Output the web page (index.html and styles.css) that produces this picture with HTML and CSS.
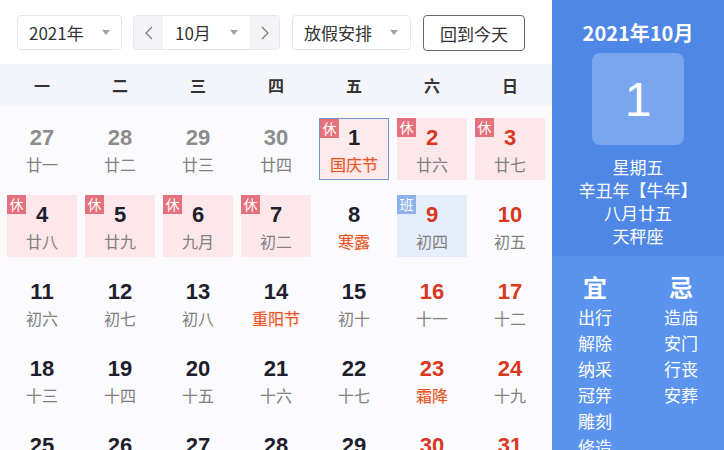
FILE: index.html
```html
<!DOCTYPE html>
<html lang="zh-CN">
<head>
<meta charset="utf-8">
<link rel="stylesheet" href="styles.css">
</head>
<body>
<div class="app">
  <div class="main">
    <div class="toolbar">
      <div class="select year"><span>2021年</span><i class="caret"></i></div>
      <div class="month-group">
        <div class="arrow"><svg width="8" height="14" viewBox="0 0 8 14"><polyline points="7,1 1,7 7,13" fill="none" stroke="#777" stroke-width="1.2"/></svg></div>
        <div class="select month"><span>10月</span><i class="caret"></i></div>
        <div class="arrow"><svg width="8" height="14" viewBox="0 0 8 14"><polyline points="1,1 7,7 1,13" fill="none" stroke="#777" stroke-width="1.2"/></svg></div>
      </div>
      <div class="select holiday"><span>放假安排</span><i class="caret"></i></div>
      <div class="today-btn">回到今天</div>
    </div>
    <div class="weekdays">
      <div>一</div><div>二</div><div>三</div><div>四</div><div>五</div><div>六</div><div>日</div>
    </div>
    <div class="days">
      <div class="day other"><div class="num">27</div><div class="lunar">廿一</div></div>
      <div class="day other"><div class="num">28</div><div class="lunar">廿二</div></div>
      <div class="day other"><div class="num">29</div><div class="lunar">廿三</div></div>
      <div class="day other"><div class="num">30</div><div class="lunar">廿四</div></div>
      <div class="day rest selected"><span class="badge">休</span><div class="num">1</div><div class="lunar fest">国庆节</div></div>
      <div class="day rest red"><span class="badge">休</span><div class="num">2</div><div class="lunar">廿六</div></div>
      <div class="day rest red"><span class="badge">休</span><div class="num">3</div><div class="lunar">廿七</div></div>

      <div class="day rest"><span class="badge">休</span><div class="num">4</div><div class="lunar">廿八</div></div>
      <div class="day rest"><span class="badge">休</span><div class="num">5</div><div class="lunar">廿九</div></div>
      <div class="day rest"><span class="badge">休</span><div class="num">6</div><div class="lunar">九月</div></div>
      <div class="day rest"><span class="badge">休</span><div class="num">7</div><div class="lunar">初二</div></div>
      <div class="day"><div class="num">8</div><div class="lunar fest">寒露</div></div>
      <div class="day work red"><span class="badge">班</span><div class="num">9</div><div class="lunar">初四</div></div>
      <div class="day red"><div class="num">10</div><div class="lunar">初五</div></div>

      <div class="day"><div class="num">11</div><div class="lunar">初六</div></div>
      <div class="day"><div class="num">12</div><div class="lunar">初七</div></div>
      <div class="day"><div class="num">13</div><div class="lunar">初八</div></div>
      <div class="day"><div class="num">14</div><div class="lunar fest">重阳节</div></div>
      <div class="day"><div class="num">15</div><div class="lunar">初十</div></div>
      <div class="day red"><div class="num">16</div><div class="lunar">十一</div></div>
      <div class="day red"><div class="num">17</div><div class="lunar">十二</div></div>

      <div class="day"><div class="num">18</div><div class="lunar">十三</div></div>
      <div class="day"><div class="num">19</div><div class="lunar">十四</div></div>
      <div class="day"><div class="num">20</div><div class="lunar">十五</div></div>
      <div class="day"><div class="num">21</div><div class="lunar">十六</div></div>
      <div class="day"><div class="num">22</div><div class="lunar">十七</div></div>
      <div class="day red"><div class="num">23</div><div class="lunar fest">霜降</div></div>
      <div class="day red"><div class="num">24</div><div class="lunar">十九</div></div>

      <div class="day"><div class="num">25</div><div class="lunar">二十</div></div>
      <div class="day"><div class="num">26</div><div class="lunar">廿一</div></div>
      <div class="day"><div class="num">27</div><div class="lunar">廿二</div></div>
      <div class="day"><div class="num">28</div><div class="lunar">廿三</div></div>
      <div class="day"><div class="num">29</div><div class="lunar">廿四</div></div>
      <div class="day red"><div class="num">30</div><div class="lunar">廿五</div></div>
      <div class="day red"><div class="num">31</div><div class="lunar">廿六</div></div>
    </div>
  </div>
  <div class="side">
    <div class="side-top">
      <div class="side-title">2021年10月</div>
      <div class="big-day">1</div>
      <div class="side-info">
        <div>星期五</div>
        <div>辛丑年【牛年】</div>
        <div>八月廿五</div>
        <div>天秤座</div>
      </div>
    </div>
    <div class="side-bottom">
      <div class="col">
        <div class="col-head">宜</div>
        <div>出行</div><div>解除</div><div>纳采</div><div>冠笄</div><div>雕刻</div><div>修造</div>
      </div>
      <div class="col">
        <div class="col-head">忌</div>
        <div>造庙</div><div>安门</div><div>行丧</div><div>安葬</div>
      </div>
    </div>
  </div>
</div>
</body>
</html>
```
FILE: styles.css
```css
* { box-sizing: border-box; }
html, body { margin: 0; padding: 0; }
body {
  width: 724px;
  height: 450px;
  overflow: hidden;
  font-family: "Noto Sans CJK SC", "Liberation Sans", sans-serif;
  background: #ffffff;
}
.app {
  display: flex;
  width: 724px;
  height: 450px;
  overflow: hidden;
}
.main {
  width: 552px;
  flex: none;
  background: #fbfbfd;
  overflow: hidden;
}
.toolbar {
  height: 64px;
  background: #ffffff;
  display: flex;
  align-items: flex-start;
  padding: 15px 0 0 17px;
}
.select {
  height: 35px;
  border: 1px solid #e6e6ea;
  border-radius: 4px;
  background: #fff;
  display: flex;
  align-items: center;
  justify-content: space-between;
  padding: 0 11px 0 11px;
  font-size: 17px;
  color: #333;
}
.caret {
  width: 0;
  height: 0;
  border-left: 4px solid transparent;
  border-right: 4px solid transparent;
  border-top: 5px solid #a0a0a0;
}
.year { width: 105px; }
.month-group {
  margin-left: 11px;
  display: flex;
  height: 35px;
  border: 1px solid #e6e6ea;
  border-radius: 4px;
  overflow: hidden;
}
.month-group .select {
  border: none;
  border-radius: 0;
  height: 33px;
  width: 87px;
  padding: 0 12px 0 12px;
}
.arrow {
  width: 29px;
  height: 33px;
  background: #f4f4f6;
  display: flex;
  align-items: center;
  justify-content: center;
}
.holiday { margin-left: 12px; width: 119px; padding-right: 12px; }
.today-btn {
  margin-left: 12px;
  width: 102px;
  height: 36px;
  border: 1px solid #6a6a6a;
  border-radius: 4px;
  background: #fff;
  display: flex;
  align-items: center;
  justify-content: center;
  font-size: 17px;
  color: #333;
}
.weekdays {
  height: 42px;
  background: #f3f5fa;
  display: grid;
  grid-template-columns: repeat(7, 70px);
  column-gap: 8px;
  padding: 0 7px;
  align-items: center;
  text-align: center;
  font-size: 16px;
  font-weight: bold;
  color: #333;
}
.days {
  display: grid;
  grid-template-columns: repeat(7, 70px);
  grid-auto-rows: 62px;
  column-gap: 8px;
  row-gap: 15px;
  padding: 12px 7px 0 7px;
}
.day {
  position: relative;
  text-align: center;
  padding-top: 7px;
}
.num {
  font-family: "Liberation Sans", "Noto Sans CJK SC", sans-serif;
  font-weight: bold;
  font-size: 22px;
  line-height: 26px;
  color: #1e1e2c;
}
.lunar {
  margin-top: 3px;
  font-size: 16px;
  line-height: 20px;
  color: #808080;
}
.other .num { color: #8c8c8c; }
.red .num { color: #d8381f; }
.fest {
  color: #e5552a;
  text-shadow: 0 0 2px rgba(255, 140, 80, 0.45);
}
.rest { background: #fde7ea; }
.work { background: #e6eefb; }
.selected {
  border: 1px solid #7393c9;
  background: #fdeaed;
  padding-top: 6px;
}
.badge {
  position: absolute;
  left: 0;
  top: 0;
  width: 19px;
  height: 19px;
  line-height: 19px;
  font-size: 14px;
  color: #fff;
  text-align: center;
  background: #e4717b;
}
.work .badge { background: #8db2ea; }
.side {
  width: 172px;
  height: 450px;
  flex: none;
  display: flex;
  flex-direction: column;
  color: #fff;
  overflow: hidden;
}
.side-top {
  height: 256px;
  flex: none;
  background: #4e87e5;
  display: flex;
  flex-direction: column;
  align-items: center;
  padding-top: 19px;
}
.side-title {
  font-size: 20px;
  font-weight: bold;
  line-height: 28px;
}
.big-day {
  margin-top: 6px;
  width: 92px;
  height: 92px;
  border-radius: 8px;
  background: #7aa6f0;
  display: flex;
  align-items: center;
  justify-content: center;
  font-family: "Liberation Sans", sans-serif;
  font-size: 48px;
}
.side-info {
  margin-top: 10px;
  text-align: center;
  font-size: 17px;
  line-height: 23px;
}
.side-bottom {
  flex: 1 1 auto;
  min-height: 0;
  background: #5a94ee;
  display: flex;
  align-items: flex-start;
  padding-top: 16px;
}
.col {
  width: 86px;
  flex: none;
  text-align: center;
  font-size: 17px;
  line-height: 26px;
}
.col-head {
  font-size: 24px;
  font-weight: bold;
  line-height: 30px;
  margin-bottom: 2px;
}
```
